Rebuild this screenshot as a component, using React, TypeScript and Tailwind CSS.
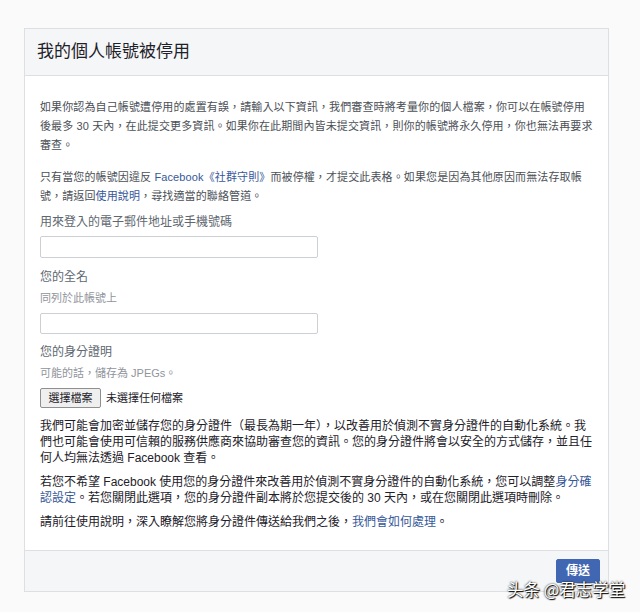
export default function App() {
  return (
    <div className="relative min-h-[612px] w-[640px] bg-[#fafafa] pt-[28px] font-['Liberation_Sans','Noto_Sans_CJK_TC',sans-serif]">
      {/* Card */}
      <div className="ml-[24px] w-[585px] border border-[#dddfe2] bg-white">
        {/* Header */}
        <div className="flex h-[47px] items-center border-b border-[#dddfe2] bg-[#f5f6f7] pl-[12px]">
          <h1 className="text-[17px] leading-[20px] text-[#1d2129]">我的個人帳號被停用</h1>
        </div>

        {/* Body */}
        <div className="px-[15px] pt-[22px] pb-[20px]">
          <p className="text-[11px] leading-[19px] tracking-[0.12px] text-[#4b4f56] whitespace-nowrap">
            如果你認為自己帳號遭停用的處置有誤，請輸入以下資訊，我們審查時將考量你的個人檔案，你可以在帳號停用
            <br />
            後最多 30 天內，在此提交更多資訊。如果你在此期間內皆未提交資訊，則你的帳號將永久停用，你也無法再要求
            <br />
            審查。
          </p>

          <p className="mt-[13px] text-[11px] leading-[19px] tracking-[0.12px] text-[#4b4f56] whitespace-nowrap">
            只有當您的帳號因違反 <span className="text-[#365899]">Facebook《社群守則》</span>而被停權，才提交此表格。如果您是因為其他原因而無法存取帳
            <br />
            號，請返回<span className="text-[#365899]">使用說明</span>，尋找適當的聯絡管道。
          </p>

          <label className="mt-[8px] block text-[12px] leading-[16px] text-[#606770]">
            用來登入的電子郵件地址或手機號碼
          </label>
          <input
            type="text"
            className="mt-[6px] block h-[22px] w-[278px] rounded-[2px] border border-[#ccd0d5] bg-white"
          />

          <label className="mt-[11px] block text-[12px] leading-[16px] text-[#606770]">您的全名</label>
          <div className="mt-[5px] text-[11px] leading-[16px] text-[#90949c]">同列於此帳號上</div>
          <input
            type="text"
            className="mt-[7px] block h-[21px] w-[278px] rounded-[2px] border border-[#ccd0d5] bg-white"
          />

          <label className="mt-[10px] block text-[12px] leading-[16px] text-[#606770]">您的身分證明</label>
          <div className="mt-[5px] text-[11px] leading-[16px] text-[#90949c]">可能的話，儲存為 JPEGs。</div>

          <div className="mt-[7px] flex h-[20px] items-center gap-[5px]">
            <button className="h-[20px] w-[61px] rounded-[2px] border border-[#8f8f8f] bg-[#efefef] text-[11px] leading-[18px] text-[#1d2129]">
              選擇檔案
            </button>
            <span className="text-[11px] text-[#1d2129]">未選擇任何檔案</span>
          </div>

          <p className="mt-[10px] text-[12px] leading-[16px] text-[#1d2129] whitespace-nowrap">
            我們可能會加密並儲存您的身分證件（最長為期一年），以改善用於偵測不實身分證件的自動化系統。我
            <br />
            們也可能會使用可信賴的服務供應商來協助審查您的資訊。您的身分證件將會以安全的方式儲存，並且任
            <br />
            何人均無法透過 Facebook 查看。
          </p>

          <p className="mt-[8px] text-[12px] leading-[16px] text-[#1d2129] whitespace-nowrap">
            若您不希望 Facebook 使用您的身分證件來改善用於偵測不實身分證件的自動化系統，您可以調整<span className="text-[#365899]">身分確</span>
            <br />
            <span className="text-[#365899]">認設定</span>。若您關閉此選項，您的身分證件副本將於您提交後的 30 天內，或在您關閉此選項時刪除。
          </p>

          <p className="mt-[8px] text-[12px] leading-[16px] text-[#1d2129]">
            請前往使用說明，深入瞭解您將身分證件傳送給我們之後，<span className="text-[#365899]">我們會如何處理</span>。
          </p>
        </div>

        {/* Footer */}
        <div className="flex justify-end border-t border-[#dddfe2] bg-[#f5f6f7] px-[8px] py-[8px]">
          <button className="h-[24px] w-[44px] rounded-[2px] border border-[#4267b2] bg-[#4267b2] text-[12px] font-bold text-white">
            傳送
          </button>
        </div>
      </div>

      {/* Watermark */}
      <div className="absolute left-[507px] top-[578px] text-[16.5px] leading-[22px] text-white font-['Noto_Sans_CJK_SC',sans-serif] [text-shadow:0_0_2px_#000,1px_1px_1px_#000]">
        头条 @君志学堂
      </div>
    </div>
  );
}
